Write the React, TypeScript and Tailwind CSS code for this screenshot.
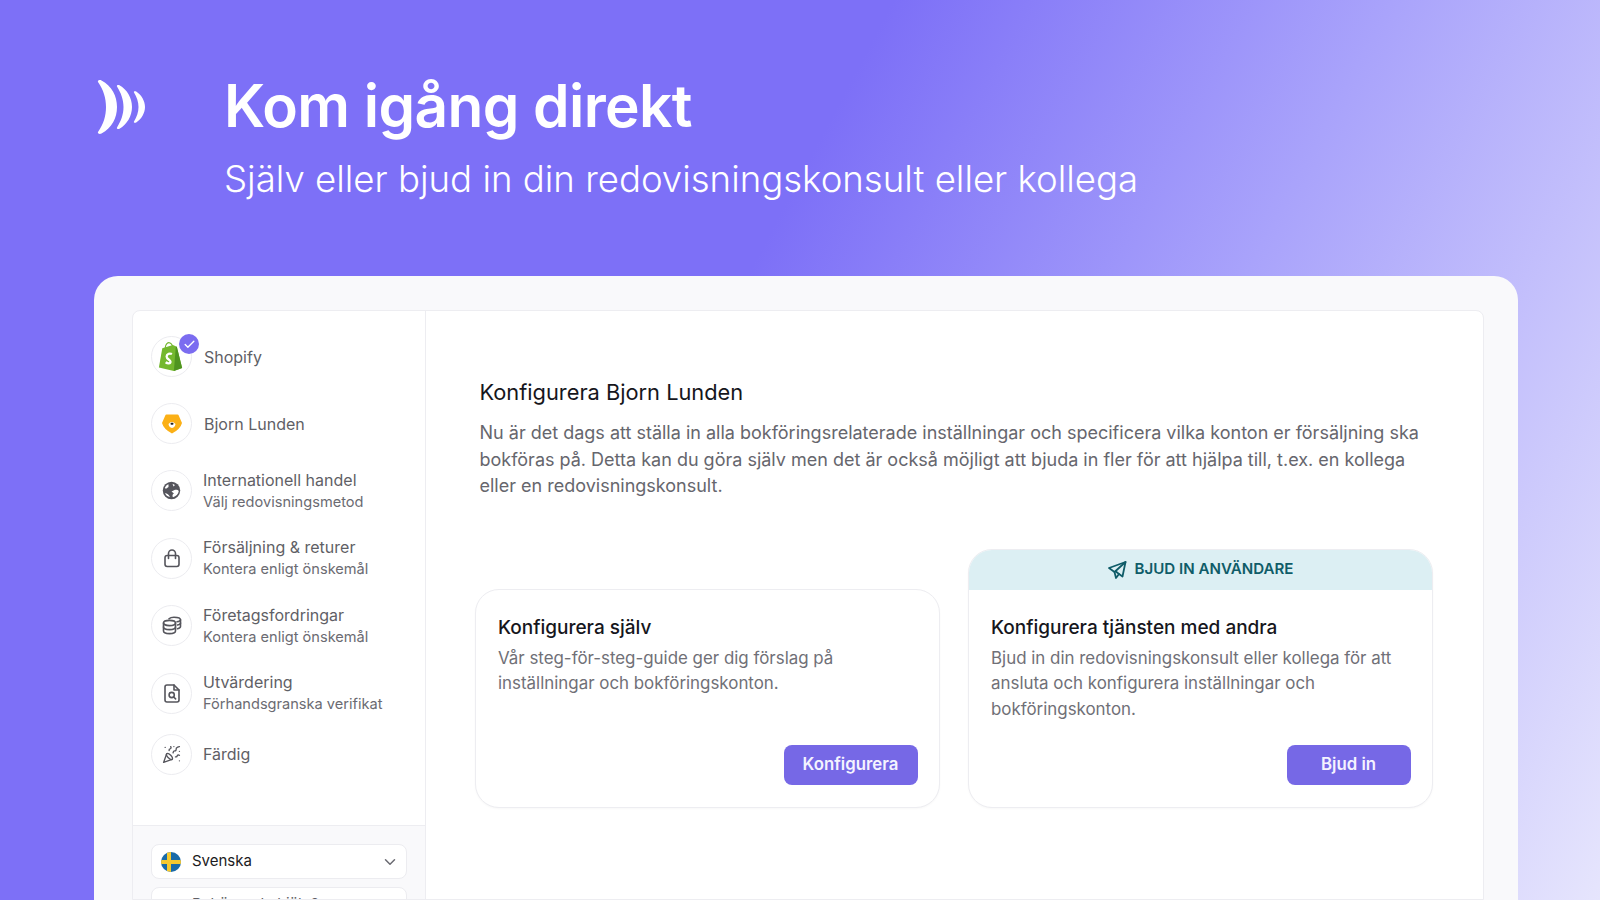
import { ChevronDown, Check, PartyPopper } from "lucide-react"

const FONT = "font-['Inter','Liberation_Sans',sans-serif]"

function Logo() {
  return (
    <svg width="48" height="54" viewBox="0 0 48 54" fill="white" className="-ml-[1px] shrink-0">
      <path d="M1 2 C0.3 0.5 2.5 -0.5 4.5 0.5 C15 6 20 16 20 27 C20 38 15 48 4.5 53.5 C2.5 54.5 0.3 53.5 1 52 C6.5 44 9 36 9 27 C9 18 6.5 10 1 2 Z" />
      <path d="M20 6.5 C19.3 5.2 21 4.5 22.5 5.3 C30 9.5 35 18 35 27 C35 36 30 44.5 22.5 48.7 C21 49.5 19.3 48.8 20 47.5 C24 41 26.5 34.5 26.5 27 C26.5 19.5 24 13 20 6.5 Z" />
      <path d="M37 12.5 C36.3 11.3 38 10.7 39.2 11.5 C44.5 15 48 21 48 27 C48 33 44.5 39 39.2 42.5 C38 43.3 36.3 42.7 37 41.5 C39.8 37 41.5 32 41.5 27 C41.5 22 39.8 17 37 12.5 Z" />
    </svg>
  )
}

function ShopifyIcon() {
  return (
    <svg width="25" height="29" viewBox="0 0 25 30" className="-ml-[2px]">
      <path d="M0.5 26.5 L4 6.5 L15 3 L19 5 L24.5 27 L16 30 Z" fill="#74b82f" />
      <path d="M19 5 L24.5 27 L16 30 L18 5 Z" fill="#4f9420" />
      <path d="M7 6.5 C7 2 10 0 12 1 C14 2 15 4 15 7" fill="none" stroke="#74b82f" strokeWidth="1.3" />
      <path d="M14 12.5 C12 11.5 8.5 12 8.5 15 C8.5 18 12.5 18 12.5 20.5 C12.5 22.5 9.5 22.5 7.5 21" fill="none" stroke="#fff" strokeWidth="2.4" />
    </svg>
  )
}

function BearIcon() {
  return (
    <svg width="20" height="20" viewBox="0 0 20 20">
      <path d="M3.5 1 Q3.5 0.5 4.5 0.5 H15.5 Q16.5 0.5 16.5 1 L20 9 Q18.5 15 10 19.5 Q1.5 15 0 9 Z" fill="#fbb016" />
      <path d="M6.5 10 Q10 6 13.5 10 Q13 13.5 10 14 Q7 13.5 6.5 10 Z" fill="#fff" />
      <rect x="8.5" y="8.8" width="3" height="2" rx="1" fill="#222" />
    </svg>
  )
}

function GlobeIcon() {
  return (
    <svg width="19" height="19" viewBox="0 0 19 19">
      <circle cx="9.5" cy="9.5" r="8.7" fill="#55555c" />
      <path d="M10.5 2.8 L13 4 L11.5 5.5 Z M12.5 9 C14.5 8.5 16 9 16.8 10 C16.3 13 14 15.5 11 16.2 C10 15 10.5 13 12 12.5 L9.5 10.5 Z" fill="#fff" />
      <path d="M2.8 7 C3.5 5 5 3.8 6.5 3.2 L6.5 6 L4 7.8 Z M3 12 C5 12.5 7 13.5 8 16 C5.5 15.8 3.8 14 3 12 Z" fill="#fff" />
    </svg>
  )
}

function BagIcon() {
  return (
    <svg width="18" height="19" viewBox="0 0 18 19" fill="none" stroke="#55555c" strokeWidth="1.6" strokeLinecap="round" strokeLinejoin="round">
      <rect x="2" y="6.5" width="14" height="11" rx="2.2" />
      <path d="M5.5 9.5 V4.5 a3.5 3.5 0 0 1 7 0 V9.5" />
    </svg>
  )
}

function CoinsIcon() {
  return (
    <svg width="20" height="19" viewBox="0 0 20 19" fill="none" stroke="#55555c" strokeWidth="1.6" strokeLinecap="round">
      <ellipse cx="7.5" cy="7" rx="6" ry="2.6" />
      <path d="M1.5 7 V15 C1.5 16.5 4 17.6 7.5 17.6 C11 17.6 13.5 16.5 13.5 15 V7" />
      <path d="M1.5 11 C1.5 12.5 4 13.6 7.5 13.6 C11 13.6 13.5 12.5 13.5 11" />
      <path d="M7 2.8 C8 1.8 10 1.2 12 1.2 C15.5 1.2 18.5 2.3 18.5 3.8 V10.5 C18.5 11.5 17 12.3 15.5 12.7" />
      <path d="M15 5.8 C17 5.5 18.5 4.8 18.5 3.8 M15.5 9 C17.2 8.6 18.5 8 18.5 7" />
    </svg>
  )
}

function DocSearchIcon() {
  return (
    <svg width="16" height="19" viewBox="0 0 16 19" fill="none" stroke="#55555c" strokeWidth="1.6" strokeLinecap="round" strokeLinejoin="round">
      <path d="M10 1 H3 C1.9 1 1 1.9 1 3 V16 C1 17.1 1.9 18 3 18 H13 C14.1 18 15 17.1 15 16 V6 Z" />
      <path d="M10 1 V6 H15" />
      <circle cx="7.7" cy="11" r="2.6" />
      <path d="M9.7 13 L11.6 14.9" />
    </svg>
  )
}

function PlaneIcon() {
  return (
    <svg width="19" height="18" viewBox="0 0 19 18" fill="none" stroke="#0f5c68" strokeWidth="1.8" strokeLinejoin="round" strokeLinecap="round">
      <path d="M17.5 1 L1 7 L6.5 11 L8 17 L11 13 L14.5 15.5 Z" />
      <path d="M17.5 1 L6.5 11 M11 13 L8.5 11" />
    </svg>
  )
}

function SwedishFlag() {
  return (
    <span className="relative block size-5 shrink-0 overflow-hidden rounded-full bg-[#1a6ba8]">
      <span className="absolute left-0 right-0 top-[8px] h-1 bg-[#f7c92e]" />
      <span className="absolute bottom-0 left-[6px] top-0 w-1 bg-[#f7c92e]" />
    </span>
  )
}

function StepCircle({ children }: { children: React.ReactNode }) {
  return (
    <span className="flex size-[41px] shrink-0 items-center justify-center rounded-full border border-[#ececf0] bg-white">
      {children}
    </span>
  )
}

const steps = [
  { title: "Internationell handel", sub: "Välj redovisningsmetod", icon: <GlobeIcon /> },
  { title: "Försäljning & returer", sub: "Kontera enligt önskemål", icon: <BagIcon /> },
  { title: "Företagsfordringar", sub: "Kontera enligt önskemål", icon: <CoinsIcon /> },
  { title: "Utvärdering", sub: "Förhandsgranska verifikat", icon: <DocSearchIcon /> },
]

export default function App() {
  return (
    <div className={`${FONT} flex h-[900px] w-[1600px] flex-col overflow-hidden bg-[linear-gradient(118deg,#7d70f7_0%,#7d70f7_43%,#a9a3fb_67%,#e6e5fd_100%)]`}>
      <header className="flex h-[276px] shrink-0 pl-[98px] pt-[80px]">
        <Logo />
        <div className="ml-[79px] text-white">
          <h1 className="text-[58.6px] font-semibold leading-[52px] tracking-[-0.6px]">Kom igång direkt</h1>
          <p className="mt-[25px] text-[36.6px] font-light leading-[44px]">Själv eller bjud in din redovisningskonsult eller kollega</p>
        </div>
      </header>

      <div className="ml-[94px] flex h-[624px] w-[1424px] shrink-0 flex-col rounded-t-[24px] bg-[#f9f9fb] pl-[38px] pr-[34px] pt-[34px]">
        <div className="flex flex-1 overflow-hidden rounded-t-[8px] border border-[#ededf1] bg-white">
          <aside className="flex w-[293px] shrink-0 flex-col border-r border-[#ededf1]">
            <div className="h-[514px] shrink-0 pl-[18px] text-[#5f5f66]">
              <div className="flex h-[67px] items-center gap-[12px] pt-[24px]">
                <span className="relative">
                  <StepCircle><ShopifyIcon /></StepCircle>
                  <span className="absolute -right-[7px] -top-[2px] flex size-5 items-center justify-center rounded-full bg-[#7b6cf0] text-white">
                    <Check size={13} strokeWidth={2.5} />
                  </span>
                </span>
                <span className="text-[16px]">Shopify</span>
              </div>
              <div className="mt-[25px] flex h-[41px] items-center gap-[12px]">
                <StepCircle><BearIcon /></StepCircle>
                <span className="text-[16px]">Bjorn Lunden</span>
              </div>
              {steps.map((s) => (
                <div key={s.title} className="mt-[26.4px] flex h-[41px] items-center gap-[11px]">
                  <StepCircle>{s.icon}</StepCircle>
                  <div>
                    <div className="text-[16px] leading-[22px]">{s.title}</div>
                    <div className="text-[14.6px] leading-[22px] text-[#6b6b72]">{s.sub}</div>
                  </div>
                </div>
              ))}
              <div className="mt-[20px] flex h-[41px] items-center gap-[11px]">
                <StepCircle><PartyPopper size={19} strokeWidth={1.7} className="text-[#55555c]" /></StepCircle>
                <span className="text-[16px]">Färdig</span>
              </div>
            </div>
            <div className="flex flex-1 flex-col gap-[8px] border-t border-[#ededf1] bg-[#f9f9fb] px-[18px] pt-[18px]">
              <div className="flex h-[35px] shrink-0 items-center rounded-[8px] border border-[#ececf0] bg-white pl-[9px] pr-[7px]">
                <SwedishFlag />
                <span className="ml-[11px] flex-1 text-[15px] text-[#1c1c22]">Svenska</span>
                <ChevronDown size={18} className="text-[#6b6b72]" />
              </div>
              <div className="flex h-[35px] shrink-0 items-center rounded-[8px] border border-[#ececf0] bg-white pl-[9px] text-[15px] text-[#5f5f66]">
                <span className="ml-[31px]">Behöver du hjälp?</span>
              </div>
            </div>
          </aside>

          <main className="flex-1 pl-[53.5px] pr-[49px] pt-[67px]">
            <h2 className="text-[21.8px] leading-[28px] text-[#16161c]">Konfigurera Bjorn Lunden</h2>
            <p className="mt-[14px] w-[950px] text-[18px] leading-[26.6px] text-[#66666d]">
              Nu är det dags att ställa in alla bokföringsrelaterade inställningar och specificera vilka konton er försäljning ska bokföras på. Detta kan du göra själv men det är också möjligt att bjuda in fler för att hjälpa till, t.ex. en kollega eller en redovisningskonsult.
            </p>
            <div className="-ml-[4.5px] mt-[49px] flex items-end gap-[28px]">
              <section className="flex h-[219px] w-[465px] flex-col rounded-[24px] border border-[#ededf1] bg-white pb-[22px] pl-[22px] pr-[21.5px] pt-[25px] shadow-[0_1px_2px_rgba(0,0,0,0.03)]">
                <h3 className="text-[19px] font-[450] leading-[26px] text-[#16161c]">Konfigurera själv</h3>
                <p className="mt-[5px] text-[16.9px] leading-[25.5px] text-[#707077]">Vår steg-för-steg-guide ger dig förslag på inställningar och bokföringskonton.</p>
                <button className="ml-auto mt-auto flex h-[40px] w-[134px] items-center justify-center rounded-[8px] bg-[#7668e6] text-[16.8px] font-semibold text-[#f4f3ff]">Konfigurera</button>
              </section>
              <section className="flex h-[259px] w-[465px] flex-col overflow-hidden rounded-[24px] border border-[#ededf1] bg-white shadow-[0_1px_2px_rgba(0,0,0,0.03)]">
                <div className="flex h-[40px] shrink-0 items-center justify-center gap-[8px] bg-[#dceff3] text-[15.1px] font-semibold text-[#0f5c68]">
                  <PlaneIcon />
                  BJUD IN ANVÄNDARE
                </div>
                <div className="flex flex-1 flex-col pb-[22px] pl-[22px] pr-[21.5px] pt-[25px]">
                  <h3 className="text-[19px] font-[450] leading-[26px] text-[#16161c]">Konfigurera tjänsten med andra</h3>
                  <p className="mt-[5px] text-[16.9px] leading-[25.5px] text-[#707077]">Bjud in din redovisningskonsult eller kollega för att ansluta och konfigurera inställningar och bokföringskonton.</p>
                  <button className="ml-auto mt-auto flex h-[40px] w-[124px] items-center justify-center rounded-[8px] bg-[#7668e6] text-[16.8px] font-semibold text-[#f4f3ff]">Bjud in</button>
                </div>
              </section>
            </div>
          </main>
        </div>
      </div>
    </div>
  )
}
